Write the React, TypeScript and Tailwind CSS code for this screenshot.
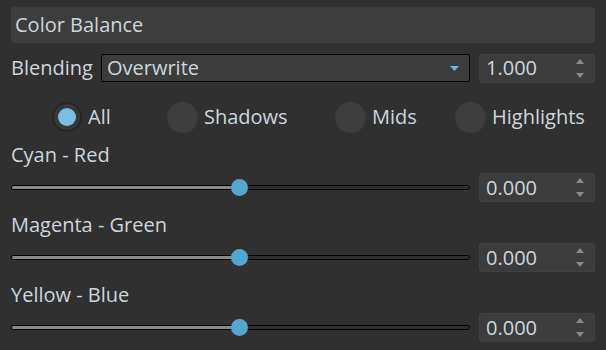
import * as React from "react";

// Colour Balance panel
const font = { fontFamily: '"Open Sans", "Noto Sans", sans-serif' };

function Arrows() {
  return (
    <div className="flex flex-col items-center gap-[9px] mr-[10px]">
      <svg width="8" height="5" viewBox="0 0 8 5">
        <polygon points="4,0 8,5 0,5" fill="#8a8a8a" />
      </svg>
      <svg width="8" height="5" viewBox="0 0 8 5">
        <polygon points="0,0 8,0 4,5" fill="#8a8a8a" />
      </svg>
    </div>
  );
}

function SpinBox({ value }: { value: string }) {
  return (
    <div className="w-[116px] h-[29px] bg-[#3c3c3c] rounded-[3px] border border-[#414141] flex items-center justify-between pl-[6px]">
      <span className="text-[20px] text-[#cdd6de] leading-none">{value}</span>
      <Arrows />
    </div>
  );
}

function Radio({ label, checked, width }: { label: string; checked?: boolean; width: string }) {
  return (
    <div className={`flex items-center gap-[6px] ${width}`}>
      {checked ? (
        <div className="w-[30px] h-[30px] rounded-full bg-[#262626] flex items-center justify-center">
          <div className="w-[26px] h-[26px] rounded-full bg-[#383838] flex items-center justify-center">
            <div className="w-[18px] h-[18px] rounded-full bg-[#78bde2]" />
          </div>
        </div>
      ) : (
        <div className="w-[31px] h-[31px] rounded-full bg-[#3d3d3d]" />
      )}
      <span className="text-[20px] text-[#cdd6de]">{label}</span>
    </div>
  );
}

function Slider({ label, value }: { label: string; value: string }) {
  return (
    <div className="flex flex-col">
      <div className="h-[41px] flex items-center pt-[4px] text-[20px] text-[#cdd6de]">{label}</div>
      <div className="h-[29px] flex items-center gap-[9px]">
        <div className="relative w-[459px] h-[29px] flex items-center">
          <div className="w-full h-[5px] rounded-full border border-black flex overflow-hidden">
            <div className="w-1/2 h-full bg-[#8a8a8a]" />
            <div className="flex-1 h-full bg-[#2f2f2f]" />
          </div>
          <div className="absolute left-[220px] top-[6px] w-[17px] h-[17px] rounded-full bg-[#53a6cf]" />
        </div>
        <SpinBox value={value} />
      </div>
    </div>
  );
}

export default function App() {
  return (
    <div className="w-[606px] h-[350px] bg-[#303030] px-[11px] pt-[7px] overflow-hidden" style={font}>
      <div className="h-[36px] bg-[#3d3d3d] rounded-[3px] flex items-center px-[4px] text-[20px] text-[#cdd6de]">
        Color Balance
      </div>

      <div className="mt-[11px] h-[28px] flex items-center">
        <span className="w-[90px] text-[20px] text-[#cdd6de]">Blending</span>
        <div className="w-[369px] h-[28px] bg-[#3c3c3c] border border-black rounded-[2px] flex items-center justify-between pl-[5px] pr-[10px]">
          <span className="text-[20px] text-[#cdd6de]">Overwrite</span>
          <svg width="9" height="5" viewBox="0 0 9 5">
            <polygon points="0,0 9,0 4.5,5" fill="#6cb4dc" />
          </svg>
        </div>
        <div className="ml-[9px]">
          <SpinBox value="1.000" />
        </div>
      </div>

      <div className="mt-[20px] h-[30px] flex items-center pl-[41px]">
        <Radio label="All" checked width="w-[115px]" />
        <Radio label="Shadows" width="w-[168px]" />
        <Radio label="Mids" width="w-[120px]" />
        <Radio label="Highlights" width="w-[140px]" />
      </div>

      <Slider label="Cyan - Red" value="0.000" />
      <Slider label="Magenta - Green" value="0.000" />
      <Slider label="Yellow - Blue" value="0.000" />
    </div>
  );
}
